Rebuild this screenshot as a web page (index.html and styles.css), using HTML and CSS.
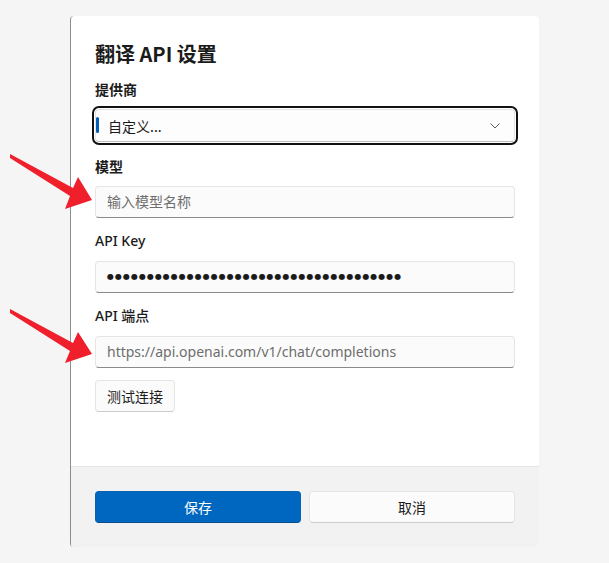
FILE: index.html
```html
<html lang="zh-CN">
  <head>
    <meta charset="utf-8">
    <meta name="viewport" content="width=device-width, initial-scale=1">
    <link rel="stylesheet" href="styles.css">
  </head>
  <body>
  <div class="dialog">
    <div class="dialog_body">
      <div class="dialog_title">翻译 API 设置</div>

      <div class="field field__first">
        <div class="field_label">提供商</div>
        <div class="combo combo__focused">
          <span class="combo_accent"></span>
          <span class="combo_text">自定义...</span>
          <svg class="combo_chevron" width="10" height="6" viewBox="0 0 10 6">
            <path d="M0.5 0.5 L5 5 L9.5 0.5" fill="none" stroke="#5d5d5d" stroke-width="1"/>
          </svg>
        </div>
      </div>

      <div class="field">
        <div class="field_label">模型</div>
        <div class="input input__placeholder">输入模型名称</div>
      </div>

      <div class="field">
        <div class="field_label field_label__plain">API Key</div>
        <div class="input input__dots">●●●●●●●●●●●●●●●●●●●●●●●●●●●●●●●●●●●●●</div>
      </div>

      <div class="field">
        <div class="field_label field_label__plain">API 端点</div>
        <div class="input input__placeholder">https://api.openai.com/v1/chat/completions</div>
      </div>

      <div class="button button__test">测试连接</div>
    </div>

    <div class="dialog_footer">
      <div class="button button__primary">保存</div>
      <div class="button">取消</div>
    </div>
  </div>

  <!-- annotation arrows drawn over the screenshot -->
  <svg class="arrows" width="609" height="563" viewBox="0 0 609 563">
    <polygon fill="#ef1f2b" points="10,154 73,188 78,177 92,200 65,209 70,196 10,158"/>
    <polygon fill="#ef1f2b" points="10,309 73,343 78,332 92,354 65,363 70,351 10,313"/>
  </svg>
</body>
</html>
```

FILE: styles.css
```css
html, body {
  padding: 0px; margin: 0px;
  background: #f5f5f5;
  font-family: "Noto Sans", "Noto Sans CJK SC", sans-serif;
  color: #1b1b1b;
}

.dialog {
  margin: 16px 0 0 70px;
  width: 468px; height: 531px;
  background: #ffffff;
  border-left: 1px solid #8c8c8c;
  border-radius: 4px;
  display: flex;
  flex-direction: column;
  overflow: hidden;
}

.dialog_body {
  flex: 1;
  padding: 24px 24px 0 24px;
}

.dialog_title {
  font-family: "Noto Sans CJK SC", sans-serif;
  font-size: 20px;
  font-weight: 700;
  line-height: 28px;
  margin-bottom: 11px;
}

.field {
  margin-top: 13px;
}
.field__first {
  margin-top: 0;
  margin-bottom: 14px;
}
.field__first + .field {
  margin-top: 0;
}

.field_label {
  font-family: "Noto Sans CJK SC", sans-serif;
  font-size: 14px;
  font-weight: 700;
  line-height: 20px;
  margin-bottom: 10px;
}
.field_label__plain {
  font-family: "Noto Sans", "Noto Sans CJK SC", sans-serif;
  font-weight: 500;
}

.combo {
  height: 33px;
  box-sizing: border-box;
  background: #fdfdfd;
  border: 1px solid #e3e3e3;
  border-bottom-color: #bdbdbd;
  border-radius: 4px;
  display: flex;
  align-items: center;
  position: relative;
}
.combo__focused {
  outline: 2px solid #111111;
  outline-offset: 1px;
}
.combo_accent {
  position: absolute;
  left: 0; top: 7px;
  width: 3px; height: 16px;
  border-radius: 2px;
  background: #005fb8;
}
.combo_text {
  flex: 1;
  padding-left: 12px;
  font-family: "Noto Sans CJK SC", sans-serif;
  font-size: 14px;
  line-height: 20px;
}
.combo_chevron {
  margin-right: 14px;
}

.input {
  height: 32px;
  box-sizing: border-box;
  background: #fbfbfb;
  border: 1px solid #e5e5e5;
  border-bottom-color: #8a8a8a;
  border-radius: 4px;
  padding: 0 11px;
  font-size: 14px;
  line-height: 30px;
  white-space: nowrap;
  overflow: hidden;
}
.input__placeholder {
  color: #6e6e6e;
}
.input__dots {
  font-family: "DejaVu Sans", sans-serif;
  font-size: 8px;
  letter-spacing: 1px;
  color: #1b1b1b;
}

.button {
  height: 32px;
  box-sizing: border-box;
  background: #fbfbfb;
  border: 1px solid #e5e5e5;
  border-bottom-color: #cccccc;
  border-radius: 4px;
  font-family: "Noto Sans CJK SC", sans-serif;
  font-size: 14px;
  line-height: 30px;
  text-align: center;
}
.button__test {
  display: inline-block;
  margin-top: 12px;
  padding: 0 11px;
}
.button__primary {
  background: #0067c0;
  border-color: #0b62ad;
  border-bottom-color: #0a4f8c;
  color: #ffffff;
}

.dialog_footer {
  background: #f2f2f2;
  border-top: 1px solid #e5e5e5;
  padding: 24px;
  display: grid;
  grid-template-columns: 1fr 1fr;
  gap: 8px;
}

.arrows {
  position: absolute;
  left: 0; top: 0;
  pointer-events: none;
}
```
